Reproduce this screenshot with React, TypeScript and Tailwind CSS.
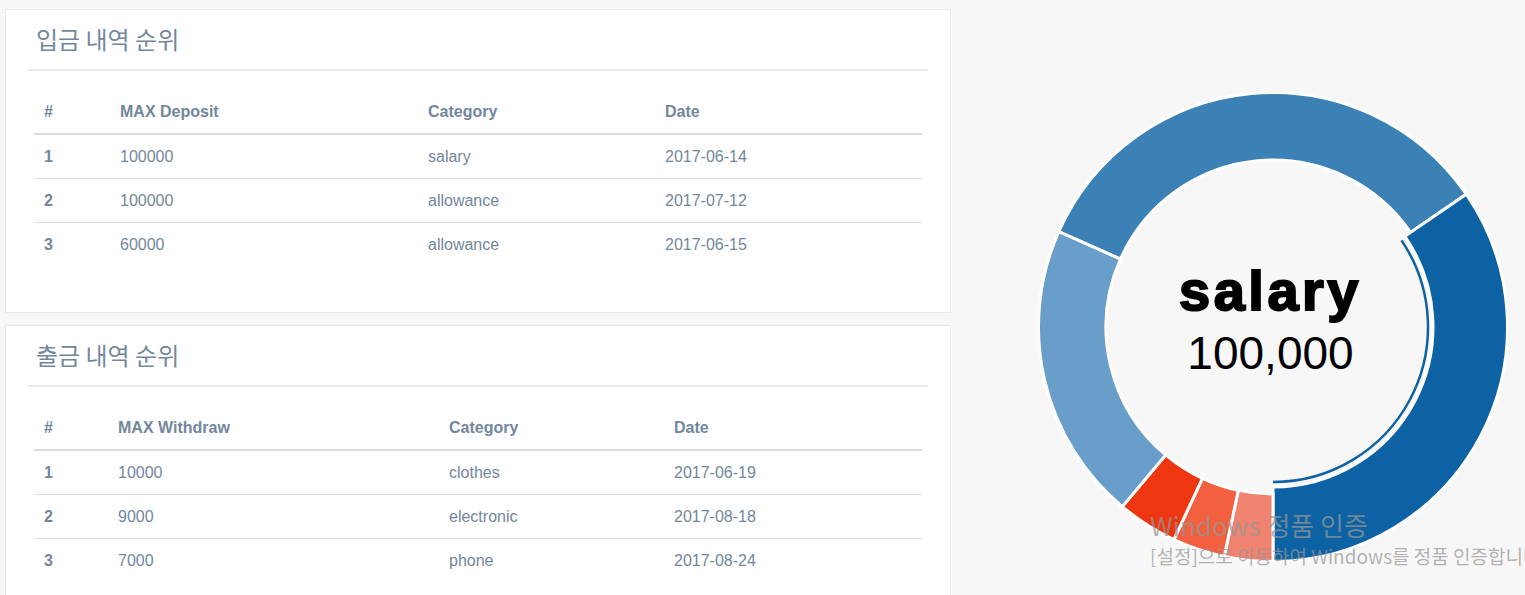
import React from 'react';

type Row = { amount: string; category: string; date: string };

const deposits: Row[] = [
  { amount: '100000', category: 'salary', date: '2017-06-14' },
  { amount: '100000', category: 'allowance', date: '2017-07-12' },
  { amount: '60000', category: 'allowance', date: '2017-06-15' },
];

const withdraws: Row[] = [
  { amount: '10000', category: 'clothes', date: '2017-06-19' },
  { amount: '9000', category: 'electronic', date: '2017-08-18' },
  { amount: '7000', category: 'phone', date: '2017-08-24' },
];

const CX = 235;
const CY = 235;

function pt(r: number, deg: number) {
  const a = (deg * Math.PI) / 180;
  return [CX + r * Math.sin(a), CY - r * Math.cos(a)];
}

function arcPath(from: number, to: number, r1: number, r0: number) {
  const large = to - from > 180 ? 1 : 0;
  const [x1, y1] = pt(r1, from);
  const [x2, y2] = pt(r1, to);
  const [x3, y3] = pt(r0, to);
  const [x4, y4] = pt(r0, from);
  return `M${x1} ${y1} A${r1} ${r1} 0 ${large} 1 ${x2} ${y2} L${x3} ${y3} A${r0} ${r0} 0 ${large} 0 ${x4} ${y4} Z`;
}

function linePath(from: number, to: number, r: number) {
  const large = to - from > 180 ? 1 : 0;
  const [x1, y1] = pt(r, from);
  const [x2, y2] = pt(r, to);
  return `M${x1} ${y1} A${r} ${r} 0 ${large} 1 ${x2} ${y2}`;
}

const segments = [
  { from: 294, to: 415.5, fill: '#3B81B5', r0: 167 },
  { from: 55.5, to: 180, fill: '#0D62A4', r0: 160 },
  { from: 180, to: 192, fill: '#F08270', r0: 167 },
  { from: 192, to: 205, fill: '#F2603F', r0: 167 },
  { from: 205, to: 220, fill: '#EE3610', r0: 167 },
  { from: 220, to: 294, fill: '#699ECA', r0: 167 },
];

function RankPanel({
  title,
  amountLabel,
  rows,
  widths,
}: {
  title: string;
  amountLabel: string;
  rows: Row[];
  widths: string[];
}) {
  return (
    <div className="h-[304px] w-[946px] shrink-0 border border-[#E6E9ED] bg-white px-[22px] pt-[10px]">
      <div className="h-[49px]">
        <h2 className="pt-[4px] pl-[8px] text-[24px] leading-[30px] font-normal text-[#73879C] [font-family:'Noto_Sans_CJK_KR',sans-serif]">
          {title}
        </h2>
      </div>
      <div className="h-[2px] bg-[#E6E9ED]" />
      <div className="mx-[6px] mt-[18px] text-[16px] text-[#73879C] [font-family:'Liberation_Sans',Arial,sans-serif]">
        <div className="flex h-[46px] items-center border-b-2 border-[#DDDDDD] pt-px font-bold">
          <div className={`${widths[0]} pl-[10px]`}>#</div>
          <div className={`${widths[1]} pl-[10px]`}>{amountLabel}</div>
          <div className={`${widths[2]} pl-[10px]`}>Category</div>
          <div className="flex-1 pl-[10px]">Date</div>
        </div>
        {rows.map((r, i) => (
          <div
            key={i}
            className={`flex items-center ${i > 0 ? 'h-[44px] border-t border-[#DDDDDD]' : 'h-[43px]'}`}
          >
            <div className={`${widths[0]} pl-[10px] font-bold`}>{i + 1}</div>
            <div className={`${widths[1]} pl-[10px]`}>{r.amount}</div>
            <div className={`${widths[2]} pl-[10px]`}>{r.category}</div>
            <div className="flex-1 pl-[10px]">{r.date}</div>
          </div>
        ))}
      </div>
    </div>
  );
}

export default function App() {
  return (
    <div className="relative flex h-[595px] w-[1525px] overflow-hidden bg-[#F7F7F7]">
      <div className="flex w-[951px] shrink-0 flex-col gap-[12px] pl-[5px] pt-[9px]">
        <RankPanel
          title="입금 내역 순위"
          amountLabel="MAX Deposit"
          rows={deposits}
          widths={['w-[76px]', 'w-[308px]', 'w-[237px]']}
        />
        <RankPanel
          title="출금 내역 순위"
          amountLabel="MAX Withdraw"
          rows={withdraws}
          widths={['w-[74px]', 'w-[331px]', 'w-[225px]']}
        />
      </div>

      <div className="flex-1 pl-[87px] pt-[92px]">
        <div className="relative h-[470px] w-[470px]">
          <svg width="470" height="470" viewBox="0 0 470 470">
            {segments.map((s, i) => (
              <path key={i} d={arcPath(s.from, s.to, 234.5, s.r0)} fill={s.fill} stroke="#ffffff" strokeWidth="3" />
            ))}
            <path d={linePath(56, 180, 155)} fill="none" stroke="#0D62A4" strokeWidth="2.5" />
          </svg>
          <div className="absolute left-0 right-0 top-[171px] flex flex-col items-center pr-[5px] text-black [font-family:'Liberation_Sans',Arial,sans-serif]">
            <div className="text-[56px] leading-[56px] font-bold tracking-[3.5px] [-webkit-text-stroke:2px_black]">
              salary
            </div>
            <div className="mt-[11px] text-[46px] leading-[46px]">100,000</div>
          </div>
        </div>
      </div>

      <div className="pointer-events-none absolute left-[1150px] top-[509px] whitespace-nowrap text-[rgba(150,150,150,0.72)] [font-family:'Noto_Sans_CJK_KR','Noto_Sans',sans-serif]">
        <div className="text-[26px] leading-[32px]">Windows 정품 인증</div>
        <div className="mt-[4px] text-[19px] leading-[22px]">[설정]으로 이동하여 Windows를 정품 인증합니다.</div>
      </div>
    </div>
  );
}
